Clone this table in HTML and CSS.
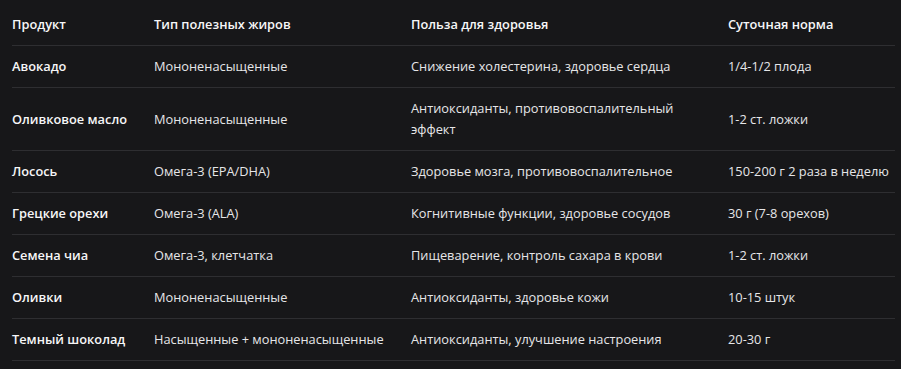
FILE: index.html
```html
<!DOCTYPE html>
<html lang="ru">
<head>
<meta charset="utf-8">
<link rel="stylesheet" href="styles.css">
</head>
<body>
<div class="wrap">
<table class="fats">
<colgroup>
<col class="c1"><col class="c2"><col class="c3"><col class="c4">
</colgroup>
<thead>
<tr><th>Продукт</th><th>Тип полезных жиров</th><th>Польза для здоровья</th><th>Суточная норма</th></tr>
</thead>
<tbody>
<tr><td class="name">Авокадо</td><td>Мононенасыщенные</td><td>Снижение холестерина, здоровье сердца</td><td>1/4-1/2 плода</td></tr>
<tr><td class="name">Оливковое масло</td><td>Мононенасыщенные</td><td>Антиоксиданты, противовоспалительный эффект</td><td>1-2 ст. ложки</td></tr>
<tr><td class="name">Лосось</td><td>Омега-3 (EPA/DHA)</td><td>Здоровье мозга, противовоспалительное</td><td class="nowrap">150-200 г 2 раза в неделю</td></tr>
<tr><td class="name">Грецкие орехи</td><td>Омега-3 (ALA)</td><td>Когнитивные функции, здоровье сосудов</td><td>30 г (7-8 орехов)</td></tr>
<tr><td class="name">Семена чиа</td><td>Омега-3, клетчатка</td><td>Пищеварение, контроль сахара в крови</td><td>1-2 ст. ложки</td></tr>
<tr><td class="name">Оливки</td><td>Мононенасыщенные</td><td>Антиоксиданты, здоровье кожи</td><td>10-15 штук</td></tr>
<tr><td class="name">Темный шоколад</td><td>Насыщенные + мононенасыщенные</td><td>Антиоксиданты, улучшение настроения</td><td>20-30 г</td></tr>
</tbody>
</table>
</div>
</body>
</html>
```
FILE: styles.css
```css
html, body {
  margin: 0;
  background: #171719;
}
body {
  font-family: "Open Sans", "Noto Sans", sans-serif;
  font-size: 12.8px;
  color: #e6e6e8;
}
.wrap {
  padding: 4px 6px 0 12px;
}
.fats {
  border-collapse: collapse;
  table-layout: fixed;
  width: 883px;
}
.c1 { width: 142px; }
.c2 { width: 257px; }
.c3 { width: 317px; }
.c4 { width: 167px; }
.fats th, .fats td {
  text-align: left;
  vertical-align: middle;
  padding: 10px 16px 10px 0;
  line-height: 21px;
  border-bottom: 1px solid #2e2e31;
}
.fats th {
  font-weight: 600;
  color: #f6f6f7;
}
.fats td.name {
  font-weight: 600;
  color: #f6f6f7;
}
.nowrap {
  white-space: nowrap;
}
```
